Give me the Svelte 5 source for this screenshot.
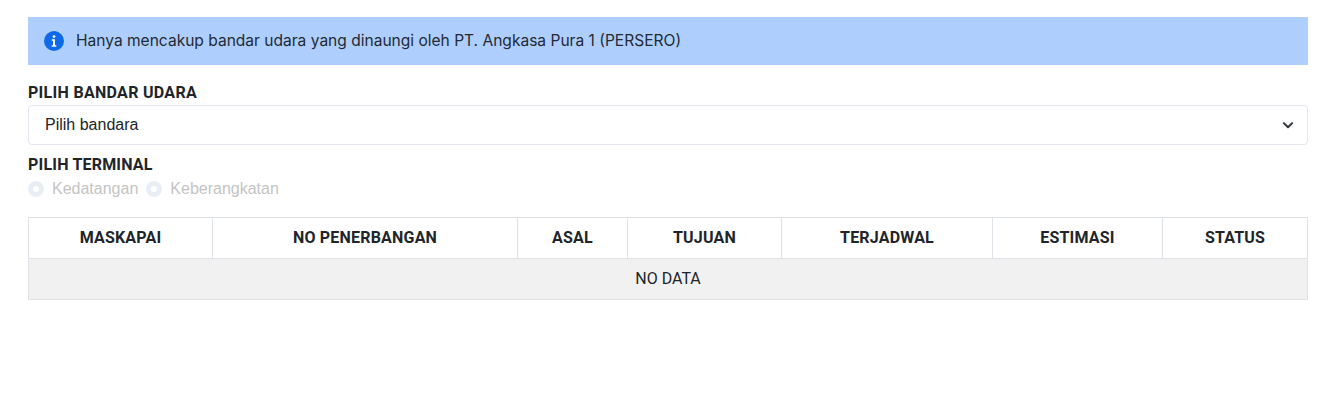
<script>
  const columns = ['MASKAPAI', 'NO PENERBANGAN', 'ASAL', 'TUJUAN', 'TERJADWAL', 'ESTIMASI', 'STATUS'];
  const terminals = ['Kedatangan', 'Keberangkatan'];
</script>

<div class="page">
  <div class="alert">
    <svg class="alert-icon" width="20" height="20" viewBox="0 0 20 20">
      <circle cx="10" cy="10" r="10" fill="#0d6ae8" />
      <circle cx="10" cy="5.6" r="1.4" fill="#fff" />
      <path d="M7.8 8.3h3.2v6h1.3v1.5H7.7v-1.5H9V9.8H7.8z" fill="#fff" />
    </svg>
    <span class="alert-text">Hanya mencakup bandar udara yang dinaungi oleh PT. Angkasa Pura 1 (PERSERO)</span>
  </div>

  <div class="label">PILIH BANDAR UDARA</div>
  <div class="select">
    <span>Pilih bandara</span>
    <svg width="12" height="12" viewBox="0 0 16 16">
      <path d="M2.5 5.5L8 11l5.5-5.5" fill="none" stroke="#343a40" stroke-width="2.8" stroke-linecap="round" stroke-linejoin="round" />
    </svg>
  </div>

  <div class="label second">PILIH TERMINAL</div>
  <div class="radios">
    {#each terminals as name}
      <label class="radio"><span class="dot"></span>{name}</label>
    {/each}
  </div>

  <table>
    <colgroup>
      <col class="c1" /><col class="c2" /><col class="c3" /><col class="c4" /><col class="c5" /><col class="c6" /><col class="c7" />
    </colgroup>
    <thead>
      <tr>
        {#each columns as col}
          <th>{col}</th>
        {/each}
      </tr>
    </thead>
    <tbody>
      <tr>
        <td colspan="7">NO DATA</td>
      </tr>
    </tbody>
  </table>
</div>

<style>
  :global(body) {
    margin: 0;
    background: #fff;
  }

  .page {
    padding: 17px 32px 0 28px;
    color: #212529;
    font-family: Inter, "Noto Sans", sans-serif;
  }

  .alert {
    display: flex;
    align-items: center;
    gap: 12px;
    height: 48px;
    padding-left: 16px;
    background: #aecffd;
    font-size: 15.55px;
    color: #232a35;
  }

  .alert-icon {
    flex-shrink: 0;
  }

  .alert-text {
    padding-bottom: 1px;
  }

  .label {
    margin-top: 18px;
    height: 22px;
    line-height: 20px;
    font-family: Roboto, sans-serif;
    font-size: 16px;
    font-weight: 700;
    letter-spacing: 0.3px;
    color: #212529;
  }

  .label.second {
    margin-top: 10px;
    height: 20px;
    line-height: 20px;
    letter-spacing: 0.2px;
  }

  .select {
    display: flex;
    align-items: center;
    justify-content: space-between;
    box-sizing: border-box;
    height: 40px;
    padding: 0 13px 0 16px;
    border: 1px solid #e3e6f0;
    border-radius: 4px;
    font-family: "Liberation Sans", Arial, sans-serif;
    font-size: 16px;
    color: #212529;
  }

  .radios {
    display: flex;
    gap: 8px;
    height: 24px;
    margin-top: 2px;
    align-items: center;
    font-family: "Liberation Sans", Arial, sans-serif;
    font-size: 16px;
    color: #c4c4c4;
  }

  .radio {
    display: flex;
    align-items: center;
    gap: 8px;
  }

  .dot {
    box-sizing: border-box;
    width: 16px;
    height: 16px;
    border-radius: 50%;
    border: 5px solid #e9eef4;
    background: #fff;
  }

  table {
    width: 1279px;
    margin-top: 16px;
    table-layout: fixed;
    border-collapse: collapse;
    font-family: Roboto, sans-serif;
  }

  .c1 { width: 184px; }
  .c2 { width: 305px; }
  .c3 { width: 110px; }
  .c4 { width: 154px; }
  .c5 { width: 211px; }
  .c6 { width: 170px; }
  .c7 { width: 145px; }

  th, td {
    height: 41px;
    padding: 0 0 2px;
    box-sizing: border-box;
    border: 1px solid #dee2e6;
    text-align: center;
    font-size: 16px;
  }

  th {
    font-weight: 700;
    letter-spacing: 0.2px;
    color: #212529;
  }

  td {
    background: #f1f1f1;
    font-weight: 400;
  }
</style>
